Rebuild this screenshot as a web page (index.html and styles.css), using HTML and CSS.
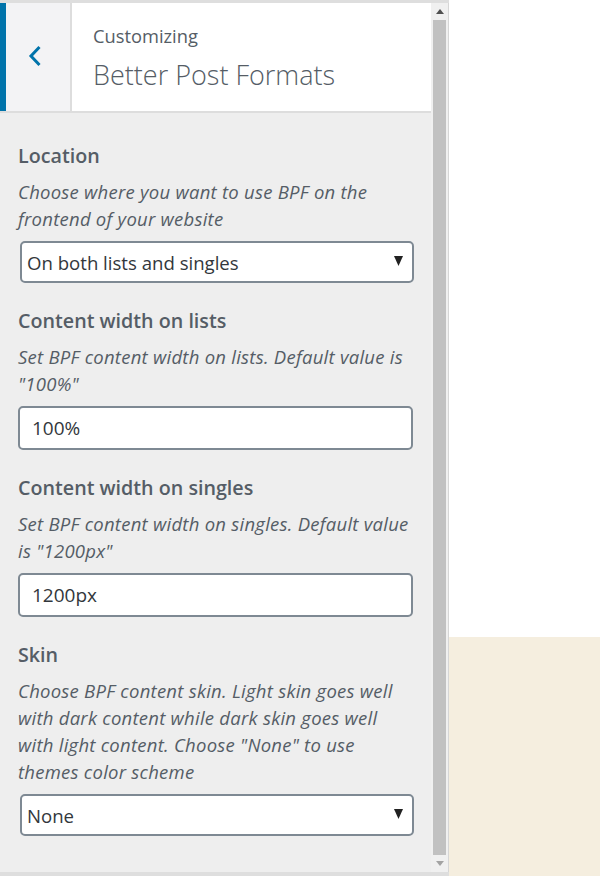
FILE: index.html
```html
<!DOCTYPE html>
<html lang="en">
<head>
<meta charset="utf-8">
<title>Customizing Better Post Formats</title>
<link rel="stylesheet" href="styles.css">
</head>
<body>
<div class="app">
  <div class="sidebar">
    <div class="sidebar-main">
      <div class="header">
        <div class="back">
          <svg width="14" height="22" viewBox="0 0 14 22"><polyline points="11.5,2 3,11 11.5,20" fill="none" stroke="#0073aa" stroke-width="3"/></svg>
        </div>
        <div class="title">
          <span class="sub">Customizing</span>
          <span class="main">Better Post Formats</span>
        </div>
      </div>
      <div class="controls">
        <div class="control">
          <div class="label">Location</div>
          <div class="desc">Choose where you want to use BPF on the frontend of your website</div>
          <div class="select"><span>On both lists and singles</span><svg class="caret" width="9" height="10" viewBox="0 0 9 10"><polygon points="0,0 9,0 4.5,10" fill="#222"/></svg></div>
        </div>
        <div class="control">
          <div class="label">Content width on lists</div>
          <div class="desc">Set BPF content width on lists. Default value is "100%"</div>
          <div class="input">100%</div>
        </div>
        <div class="control">
          <div class="label">Content width on singles</div>
          <div class="desc">Set BPF content width on singles. Default value is "1200px"</div>
          <div class="input">1200px</div>
        </div>
        <div class="control">
          <div class="label">Skin</div>
          <div class="desc">Choose BPF content skin. Light skin goes well with dark content while dark skin goes well with light content. Choose "None" to use themes color scheme</div>
          <div class="select"><span>None</span><svg class="caret" width="9" height="10" viewBox="0 0 9 10"><polygon points="0,0 9,0 4.5,10" fill="#222"/></svg></div>
        </div>
      </div>
    </div>
    <div class="scrollbar">
      <div class="arrow"><svg width="8" height="5" viewBox="0 0 8 5"><polygon points="0,5 8,5 4,0" fill="#505050"/></svg></div>
      <div class="thumb"></div>
      <div class="arrow"><svg width="8" height="5" viewBox="0 0 8 5"><polygon points="0,0 8,0 4,5" fill="#a3a3a3"/></svg></div>
    </div>
  </div>
  <div class="preview">
    <div class="preview-top"></div>
    <div class="preview-bottom"></div>
  </div>
</div>
</body>
</html>
```
FILE: styles.css
```css
html, body {
  margin: 0;
  padding: 0;
  width: 600px;
  height: 876px;
  overflow: hidden;
  font-family: "Open Sans", "Noto Sans", "Liberation Sans", sans-serif;
}
.app {
  display: flex;
  height: 876px;
}
.sidebar {
  width: 449px;
  box-sizing: border-box;
  display: flex;
  background: #eeeeee;
  border-top: 3px solid #dedede;
  border-bottom: 4px solid #dedede;
}
.sidebar-main {
  width: 432px;
  display: flex;
  flex-direction: column;
  overflow: hidden;
}
.header {
  height: 108px;
  flex: none;
  display: flex;
  background: #ffffff;
  border-bottom: 2px solid #dddddd;
}
.back {
  width: 64px;
  border-left: 6px solid #0073aa;
  border-right: 2px solid #dddddd;
  background: #f3f3f5;
  display: flex;
  align-items: center;
  justify-content: center;
}
.back svg {
  margin: -3px 6px 0 0;
}
.title {
  display: flex;
  flex-direction: column;
  padding: 21px 0 0 21px;
  color: #555d66;
}
.sub {
  font-size: 18.3px;
  line-height: 24px;
}
.main {
  margin-top: 9px;
  font-size: 27px;
  line-height: 36px;
  font-weight: 300;
}
.controls {
  padding: 29px 17px 0 18px;
}
.control {
  margin-bottom: 24px;
}
.label {
  font-size: 19.7px;
  line-height: 27px;
  font-weight: 600;
  color: #555d66;
  margin-bottom: 9px;
}
.desc {
  font-size: 18.5px;
  letter-spacing: 0.25px;
  line-height: 27px;
  font-style: italic;
  color: #555d66;
  margin-bottom: 9px;
}
.select {
  margin-left: 2px;
  width: 394px;
  height: 42px;
  box-sizing: border-box;
  border: 2px solid #7e8993;
  border-radius: 5px;
  background: #ffffff;
  display: flex;
  align-items: center;
  justify-content: space-between;
  padding: 0 9px 0 5px;
  font-size: 18.6px;
  color: #32373c;
}
.caret {
  margin-top: -2px;
}
.input {
  width: 395px;
  height: 44px;
  box-sizing: border-box;
  border: 2px solid #7e8993;
  border-radius: 5px;
  background: #ffffff;
  display: flex;
  align-items: center;
  padding: 0 12px;
  font-size: 19px;
  color: #32373c;
}
.scrollbar {
  width: 17px;
  display: flex;
  flex-direction: column;
  background: #f0f0f0;
  border-right: 1px solid #d6d6d6;
}
.arrow {
  height: 17px;
  display: flex;
  align-items: center;
  justify-content: center;
}
.thumb {
  flex: 1;
  margin: 0 2px 0 2px;
  background: #c1c1c1;
}
.preview {
  flex: 1;
  display: flex;
  flex-direction: column;
}
.preview-top {
  height: 637px;
  background: #ffffff;
}
.preview-bottom {
  flex: 1;
  background: #f5eedf;
}
```
